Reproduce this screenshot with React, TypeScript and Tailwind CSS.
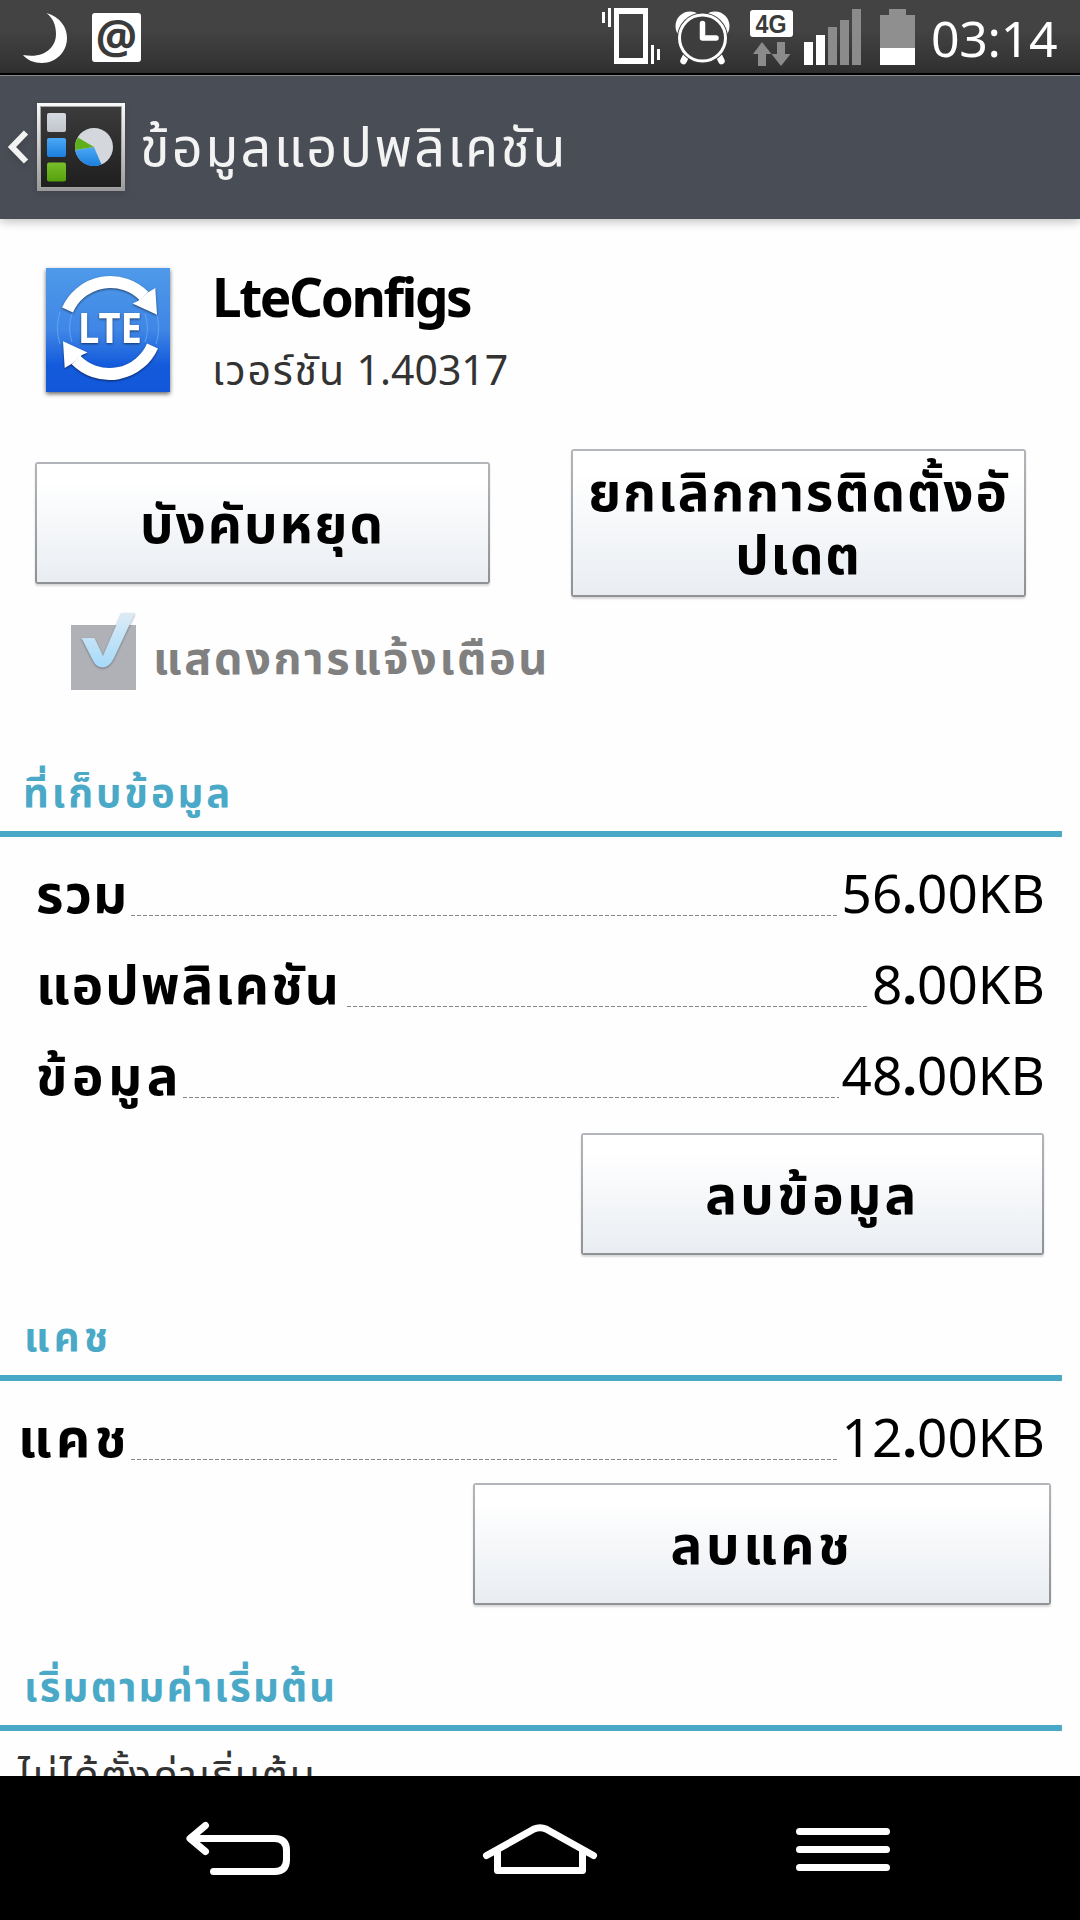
import type { ReactNode } from 'react';
import clsx from 'clsx';

const storage = [
  {
    label: 'รวม',
    value: '56.00KB',
    labelClass: 'w-[95px] tracking-[1.2px]',
  },
  {
    label: 'แอปพลิเคชัน',
    value: '8.00KB',
    labelClass: 'w-[311px] tracking-[2px]',
  },
  {
    label: 'ข้อมูล',
    value: '48.00KB',
    labelClass: 'w-[147px] tracking-[4.6px]',
  },
];

const StatusBar = () => (
  <div className="flex h-[75px] items-start justify-between border-b-2 border-black bg-linear-to-b from-[#434343] from-40% to-[#303030]">
    <div className="flex">
      <svg width="92" height="73" viewBox="0 0 92 73" fill="#fff">
        <path d="M46.500 13C60 17 67 27 67 38C67 52 56 63 42 63C34 63 27 60 23 55C45 59 56 47 56 34C56 25 53 18 46.500 13Z" />
      </svg>
      <div className="mt-[13px] flex size-[49px] items-center justify-center rounded-[3px] bg-white">
        <span className="-mt-1.5 text-[46px] leading-none font-bold text-[#3b3b3b]">
          @
        </span>
      </div>
    </div>
    <div className="flex">
      <svg width="322" height="73" viewBox="600 0 322 73">
        {/* Vibrate */}
        <g fill="#fff">
          <path d="M614 8h34v56h-34zM619 14v44h24V14z" fillRule="evenodd" />
          <path d="M602 12h3v11h-3zM608 8h3v19h-3zM651 45h3v19h-3zM657 49h3v11h-3z" />
        </g>
        {/* Alarm */}
        <g>
          <circle cx="690" cy="26" r="14.500" fill="#fff" />
          <circle cx="715" cy="26" r="14.500" fill="#fff" />
          <path
            d="M687 54l-3.500 7M718 54l3.500 7"
            stroke="#fff"
            strokeWidth="6.500"
            strokeLinecap="round"
          />
          <circle cx="702.500" cy="38" r="25.500" fill="#3d3d3d" />
          <circle
            cx="702.500"
            cy="38"
            r="23"
            fill="#3d3d3d"
            stroke="#fff"
            strokeWidth="3"
          />
          <path
            d="M702.500 23.500V38H716"
            fill="none"
            stroke="#fff"
            strokeWidth="5.500"
            strokeLinecap="round"
            strokeLinejoin="round"
          />
        </g>
        {/* Network type and data arrows */}
        <rect x="750" y="10" width="43" height="27" rx="3" fill="#fff" />
        <text
          x="755.500"
          y="33"
          textLength="31"
          lengthAdjust="spacingAndGlyphs"
          className="fill-[#3b3b3b] font-['Liberation_Sans'] text-[26px] font-bold"
        >
          4G
        </text>
        <path
          d="M762 42l9.500 12H766v12h-8V54h-5zM777 42h8v12h5.500L781 66l-9.500-12h5.500z"
          fill="#8b8b8b"
        />
        {/* Signal */}
        <path d="M804 42h9v23h-9zM816 35h9v30h-9z" fill="#fff" />
        <path
          d="M828 27h9v38h-9zM840 20h9v45h-9zM852 9h9v56h-9z"
          fill="#8b8b8b"
        />
        {/* Battery */}
        <path d="M880 15h9V9h17v6h9v33h-35z" fill="#8f8f8f" />
        <path d="M880 48h35v17h-35z" fill="#fff" />
      </svg>
      <span className="w-[158px] pl-[9px] text-[50px] leading-[76px] tracking-[-0.3px] whitespace-nowrap text-white">
        03:14
      </span>
    </div>
  </div>
);

const SettingsIcon = () => (
  <svg width="88" height="88" viewBox="0 0 88 88" className="drop-shadow-md">
    <defs>
      <linearGradient id="frame" x1="0" y1="0" x2="0" y2="1">
        <stop offset="0" stopColor="#fafafa" />
        <stop offset="1" stopColor="#999" />
      </linearGradient>
      <linearGradient id="panel" x1="0" y1="0" x2="0" y2="1">
        <stop offset="0" stopColor="#3b3b3c" />
        <stop offset="1" stopColor="#1f1f20" />
      </linearGradient>
      <linearGradient id="blue" x1="0" y1="0" x2="0" y2="1">
        <stop offset="0" stopColor="#4ba8f5" />
        <stop offset="1" stopColor="#1b7fdd" />
      </linearGradient>
      <linearGradient id="green" x1="0" y1="0" x2="0" y2="1">
        <stop offset="0" stopColor="#78c02c" />
        <stop offset="1" stopColor="#55a00c" />
      </linearGradient>
      <linearGradient id="gray" x1="0" y1="0" x2="0" y2="1">
        <stop offset="0" stopColor="#d5dae2" />
        <stop offset="1" stopColor="#c2c5ca" />
      </linearGradient>
    </defs>
    <rect width="88" height="88" fill="url(#frame)" />
    <rect x="3" y="3" width="82" height="82" fill="#a5a5a5" />
    <rect x="4" y="4" width="80" height="80" fill="url(#panel)" />
    <rect x="10" y="10" width="19" height="19" rx="2" fill="url(#gray)" />
    <rect x="10" y="35" width="19" height="19" rx="2" fill="url(#blue)" />
    <rect x="10" y="59.500" width="19" height="19" rx="2" fill="url(#green)" />
    <circle cx="57" cy="44" r="19" fill="#d4d8dc" />
    <path d="M57 44L38.200 47A19 19 0 0 0 64.500 61.500Z" fill="url(#blue)" />
    <path d="M57 44L38.200 47A19 19 0 0 1 41 34.500Z" fill="#5fae1c" />
  </svg>
);

const TitleBar = () => (
  <div className="relative z-10 flex h-[144px] items-center border-t border-[#85888c] bg-[#494d55] pb-[2px] shadow-[0_2px_10px_rgba(0,0,0,0.28)]">
    <svg width="37" height="60" viewBox="0 0 37 60" className="drop-shadow-md">
      <path
        d="M26 15.500L12 30L26 44.500"
        fill="none"
        stroke="#f3f3f3"
        strokeWidth="6"
      />
    </svg>
    <SettingsIcon />
    <h1 className="pb-[4px] pl-[15px] text-[54px] leading-[100px] tracking-[2.3px] whitespace-nowrap text-[#f3f3f3]">
      ข้อมูลแอปพลิเคชัน
    </h1>
  </div>
);

const LteIcon = () => (
  <svg
    width="124"
    height="124"
    viewBox="0 0 124 124"
    className="drop-shadow-[0_2px_2px_rgba(0,0,0,0.6)]"
  >
    <defs>
      <linearGradient id="lte" x1="0" y1="0" x2="0" y2="1">
        <stop offset="0" stopColor="#4f9ae9" />
        <stop offset="0.500" stopColor="#3f86e6" />
        <stop offset="0.780" stopColor="#145bdc" />
        <stop offset="1" stopColor="#1257da" />
      </linearGradient>
      <g id="arrow">
        <path
          d="M21.500 42A47 47 0 0 1 98 28"
          fill="none"
          stroke="#fff"
          strokeWidth="12"
        />
        <path d="M111 46.700L109.300 20L101 25L92 33L86.500 35.500Z" fill="#fff" />
      </g>
    </defs>
    <rect width="124" height="124" fill="url(#lte)" />
    <path
      d="M14 44a52 52 0 0 0 0 32M26 46a42 42 0 0 0 0 28M110 44a52 52 0 0 1 0 32M99 46a42 42 0 0 1 0 28"
      fill="none"
      stroke="#6db0f2"
      opacity="0.700"
    />
    <g className="drop-shadow-[0_1px_1px_rgba(0,0,0,0.55)]">
      <use href="#arrow" />
      <use href="#arrow" transform="rotate(180 64 60)" />
      <text
        x="32"
        y="75"
        textLength="64"
        lengthAdjust="spacingAndGlyphs"
        className="fill-white font-['Noto_Sans'] text-[42px] font-bold"
      >
        LTE
      </text>
    </g>
  </svg>
);

const Button = ({
  className,
  children,
}: {
  className: string;
  children: ReactNode;
}) => (
  <button
    className={clsx(
      'rounded-[3px] bg-linear-to-b from-[#b2b6ba] to-[#8f9295] p-0.5 text-[53px] font-bold whitespace-nowrap text-black shadow-[0_2px_2px_rgba(0,0,0,0.15)]',
      className,
    )}
  >
    <span className="flex h-full items-center justify-center bg-linear-to-b from-white from-15% to-[#e9edf2] pb-[2px] text-center leading-[63px]">
      {children}
    </span>
  </button>
);

const SectionTitle = ({
  className,
  children,
}: {
  className: string;
  children: ReactNode;
}) => (
  <h2
    className={clsx(
      'mr-[18px] flex items-end border-b-6 border-[#4ba9c8] pb-[9px] text-[40px] leading-[60px] font-bold whitespace-nowrap text-[#4ba9c8]',
      className,
    )}
  >
    {children}
  </h2>
);

const SizeRow = ({
  label,
  value,
  labelClass,
}: {
  label: string;
  value: string;
  labelClass: string;
}) => {
  const [whole, rest] = value.split('.');

  return (
    <div className="flex h-[91px] items-center pr-[35px] text-[53px] leading-[91px] text-black">
      <span
        className={clsx('shrink-0 font-bold whitespace-nowrap', labelClass)}
      >
        {label}
      </span>
      <span className="mt-[46px] h-px flex-1 bg-[repeating-linear-gradient(90deg,#858585_0_4px,transparent_4px_6px)]" />
      <span className="pl-[3px]">
        {whole}
        <b>.</b>
        {rest}
      </span>
    </div>
  );
};

const NavBar = () => (
  <div className="relative z-10 flex h-[144px] shrink-0 bg-black">
    <svg
      width="1080"
      height="144"
      viewBox="0 0 1080 144"
      fill="none"
      stroke="#fff"
      strokeWidth="7"
      strokeLinecap="round"
      strokeLinejoin="round"
    >
      <path d="M205.500 49.500L190 62.500L205.500 75.500M192 62.500H274.500Q286.500 62.500 286.500 74.500V83.500Q286.500 95.500 274.500 95.500H213.500" />
      <path d="M486.500 79.500L534 53Q540 50.500 546 53L593.500 79.500M497.500 76V94.500H582.500V76" />
      <path d="M799.500 55.500H886.500M799.500 73.500H886.500M799.500 91.500H886.500" />
    </svg>
  </div>
);

export default function App() {
  return (
    <div className="flex h-[1920px] w-[1080px] flex-col overflow-hidden bg-[#fefefe] font-['Noto_Sans','Noto_Sans_Thai',sans-serif]">
      <StatusBar />
      <TitleBar />

      <main className="h-[1557px] overflow-hidden">
        <div className="flex h-[230px] pt-[49px] pl-[46px]">
          <LteIcon />
          <div className="flex flex-col pl-[42px] whitespace-nowrap">
            <span className="mt-[-9px] text-[53px] leading-[76px] font-bold tracking-[-2.4px] text-black">
              LteConfigs
            </span>
            <span className="text-[41px] leading-[68px] text-[#333]">
              <span className="tracking-[1.8px]">เวอร์ชัน</span> 1.40317
            </span>
          </div>
        </div>

        <div className="flex h-[148px] items-center justify-between pr-[54px] pl-[35px]">
          <Button className="h-[122px] w-[455px] tracking-[2px]">
            บังคับหยุด
          </Button>
          <Button className="h-[148px] w-[455px] tracking-[1.8px]">
            ยกเลิกการติดตั้งอั
            <br />
            ปเดต
          </Button>
        </div>

        <div className="mt-[15px] flex h-[78px] items-center pl-[71px]">
          <svg width="67" height="78" viewBox="0 0 67 78">
            <defs>
              <linearGradient id="check" x1="0" y1="0" x2="0" y2="1">
                <stop offset="0" stopColor="#dcebf5" />
                <stop offset="1" stopColor="#a6dafa" />
              </linearGradient>
            </defs>
            <rect y="13" width="65" height="65" fill="#afb1b6" />
            <path
              d="M10.500 26H23.500L32 44L50.500 1H64L42.500 47Q38 55.500 31.500 55.500Q25.500 55.500 22 48.500Z"
              fill="url(#check)"
              className="drop-shadow-[0_1px_1px_rgba(0,0,0,0.35)]"
            />
          </svg>
          <span className="pt-[12px] pl-[15px] text-[45px] leading-[66px] font-bold tracking-[2.6px] whitespace-nowrap text-[#808080]">
            แสดงการแจ้งเตือน
          </span>
        </div>

        <SectionTitle className="h-[147px] pl-[23px] tracking-[2.9px]">
          ที่เก็บข้อมูล
        </SectionTitle>
        <div className="flex flex-col pt-[10px] pl-[36px]">
          {storage.map((row) => (
            <SizeRow key={row.label} {...row} />
          ))}
        </div>
        <div className="flex justify-end pt-[13px] pr-[36px]">
          <Button className="h-[122px] w-[463px] tracking-[3.4px]">
            ลบข้อมูล
          </Button>
        </div>

        <SectionTitle className="h-[126px] pl-[24px] tracking-[4.5px]">
          แคช
        </SectionTitle>
        <div className="pt-[10px] pl-[18px]">
          <SizeRow
            label="แคช"
            value="12.00KB"
            labelClass="w-[113px] tracking-[4.5px]"
          />
        </div>
        <div className="flex justify-end pt-px pr-[29px]">
          <Button className="h-[122px] w-[578px] tracking-[3.6px]">
            ลบแคช
          </Button>
        </div>

        <SectionTitle className="h-[126px] pl-[24px] tracking-[2.2px]">
          เริ่มตามค่าเริ่มต้น
        </SectionTitle>
        <p className="pt-[9px] pl-[18px] text-[41px] leading-[68px] tracking-[2px] whitespace-nowrap text-[#333]">
          ไม่ได้ตั้งค่าเริ่มต้น
        </p>
      </main>

      <NavBar />
    </div>
  );
}
